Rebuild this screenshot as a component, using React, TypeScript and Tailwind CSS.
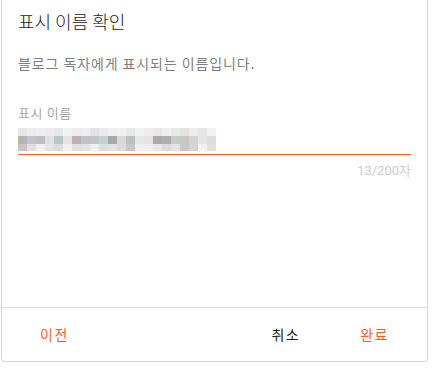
import React from "react";

const rows: string[][] = [
  [
    "bg-[#e6e6e6]", "bg-[#ececec]", "bg-[#eeeeee]", "bg-[#ebebeb]", "bg-[#e6e8e8]", "bg-[#f2f2f2]",
    "bg-[#ececec]", "bg-[#eeeeee]", "bg-[#e2e2e2]", "bg-[#e6eaea]", "bg-[#eeeeee]", "bg-[#f0f0f0]",
    "bg-[#e8e8e8]", "bg-[#f2f2f2]", "bg-[#ececec]", "bg-[#e8e8e8]", "bg-[#eeeeee]", "bg-[#e4e8e6]",
    "bg-[#e2e2e2]", "bg-[#ececec]", "bg-[#e4e4e4]", "bg-[#f2f2f2]",
  ],
  [
    "bg-[#b8b4b4]", "bg-[#c4c2c8]", "bg-[#bdbdbd]", "bg-[#e0e0e0]", "bg-[#bcc4c6]", "bg-[#e4e4e0]",
    "bg-[#b8b2b0]", "bg-[#c0c4c4]", "bg-[#c4c4c8]", "bg-[#c4d0d0]", "bg-[#a8a8a8]", "bg-[#d8d8d4]",
    "bg-[#c0c0c0]", "bg-[#e4e8e8]", "bg-[#e4e4e4]", "bg-[#aca8ac]", "bg-[#b0acac]", "bg-[#c4ccc8]",
    "bg-[#c8c8c4]", "bg-[#d0d4d4]", "bg-[#e4e4e4]", "bg-[#e0dcdc]",
  ],
  [
    "bg-[#c8c4c4]", "bg-[#e0e0e0]", "bg-[#f0f0f0]", "bg-[#e0e4e4]", "bg-[#dcdcdc]", "bg-[#f0f0f0]",
    "bg-[#e0e0e0]", "bg-[#e0e4e4]", "bg-[#f0f0f0]", "bg-[#d8e0e0]", "bg-[#e4e4e4]", "bg-[#dcdcdc]",
    "bg-[#c8c8c8]", "bg-[#f0f0f0]", "bg-[#eeeeee]", "bg-[#e8e8e8]", "bg-[#dcdcdc]", "bg-[#e4e4e4]",
    "bg-[#c8c8c8]", "bg-[#d4d4d4]", "bg-[#f4f4f4]", "bg-[#e4e0e0]",
  ],
];
const rowHeights = ["h-[8px]", "h-[8px]", "h-[7px]"];

export default function App() {
  return (
    <div className="w-[434px] h-[374px] bg-white font-['Noto_Sans_CJK_KR','Noto_Sans',sans-serif]">
      <div className="ml-[1px] w-[427px] h-[362px] flex flex-col border-x border-b border-[#d6d6d6] rounded-b-[4px] bg-white">
        <div className="flex-1 px-4 pt-2">
          <h1 className="text-[18px] leading-[26px] text-[#222222] font-light">표시 이름 확인</h1>
          <p className="mt-[19px] text-[14px] leading-[20px] tracking-[0.9px] text-[#7e7e7e]">블로그 독자에게 표시되는 이름입니다.</p>
          <div className="mt-[31px] text-[13px] leading-[18px] tracking-[0.6px] text-[#a8a8a8]">표시 이름</div>
          <div className="pt-[6px] pb-[3px] border-b border-[#ff5a23]">
            <div className="flex flex-col w-[198px]">
              {rows.map((row, i) => (
                <div key={i} className={`flex ${rowHeights[i]}`}>
                  {row.map((c, j) => (
                    <div key={j} className={`w-[9px] h-full ${c}`} />
                  ))}
                </div>
              ))}
            </div>
          </div>
          <div className="mt-[7px] text-right text-[13px] leading-[18px] text-[#cccccc] font-['Roboto','Noto_Sans_CJK_KR',sans-serif]">
            13/200자
          </div>
        </div>
        <div className="h-[54px] pb-[2px] border-t border-[#e0e0e0] flex items-center pl-4 pr-[16px]">
          <button className="px-[22px] text-[14px] leading-[20px] tracking-[1.5px] text-[#ff5a23]">이전</button>
          <div className="ml-auto flex gap-4">
            <button className="px-[22px] text-[14px] leading-[20px] tracking-[1.5px] text-[#222222]">취소</button>
            <button className="px-[22px] text-[14px] leading-[20px] tracking-[1.5px] text-[#ff5a23]">완료</button>
          </div>
        </div>
      </div>
    </div>
  );
}
